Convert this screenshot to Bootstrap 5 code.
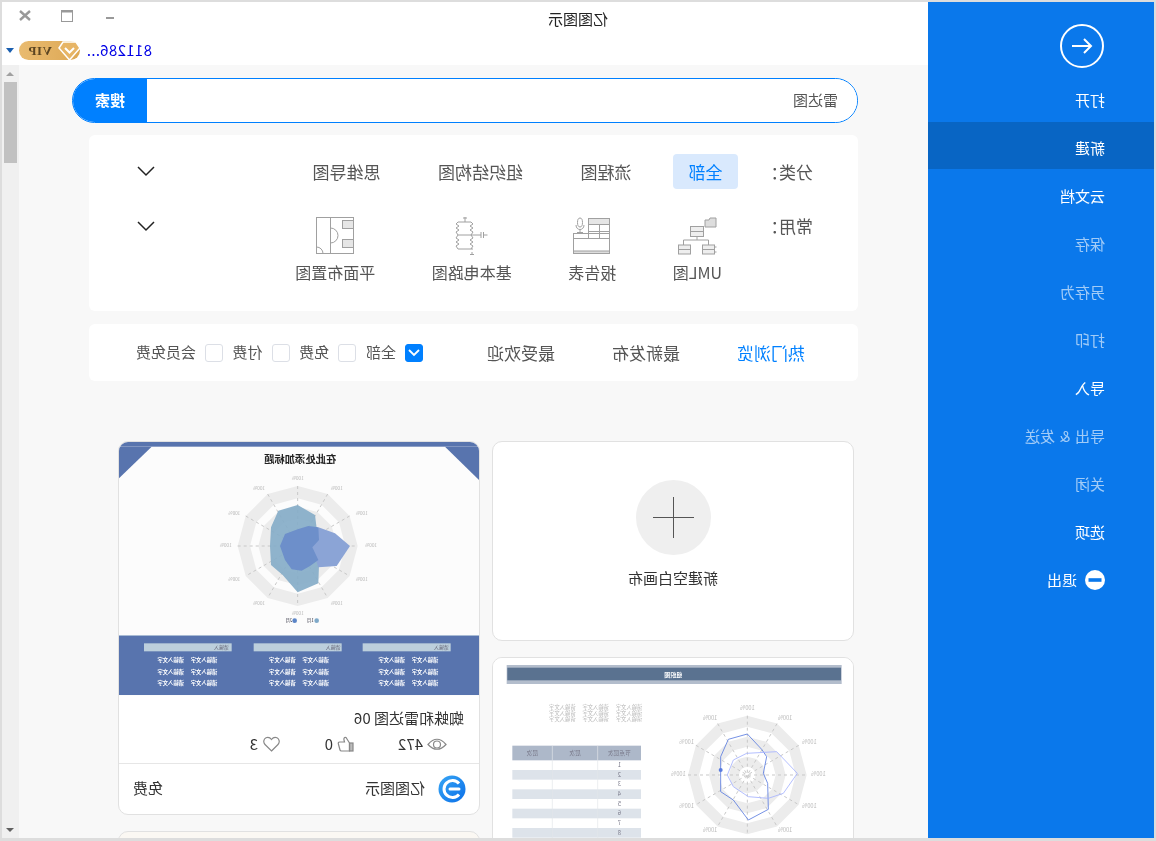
<!DOCTYPE html>
<html lang="zh-CN">
<head>
<meta charset="utf-8">
<title>亿图图示</title>
<link href="https://cdn.jsdelivr.net/npm/bootstrap@5.3.0/dist/css/bootstrap.min.css" rel="stylesheet">
<style>
html,body{margin:0;height:100%;overflow:hidden;background:#ddd;}
body{font-family:"Noto Sans CJK SC","Liberation Sans",sans-serif;font-size:15px;color:#333;}
.app-frame{width:1156px;height:841px;padding:2px 2px 3px;background:#ddd;transform:scaleX(-1);overflow:hidden;}
.side-pane{width:226px;background:#0a78eb;flex:none;padding-top:22px;}
.side-arrow{margin-left:50px;display:block;}
.side-list{margin-top:6px;}
.side-item{height:47px;margin-bottom:1px;padding:4px 0 0 49px;display:flex;align-items:center;gap:8px;color:#fff;font-size:15px;text-decoration:none;line-height:1;word-spacing:1.500px;}
.side-item.muted-item{color:rgba(255,255,255,.62);}
.side-item.current{background:#0865c4;}
.main-pane{width:926px;flex:none;}
.title-strip{height:63px;background:#fff;flex:none;}
.title-row{height:34px;}
.win-title{margin-left:320px;font-size:15px;color:#222;width:60px;white-space:nowrap;}
.win-ctrls{margin-left:auto;width:126px;flex:none;}
.user-row{height:28px;padding-left:776px;}
.user-name{color:#0000e6;font-size:15px;width:66px;white-space:nowrap;letter-spacing:.35px;}
.vip-wrap{width:61px;height:19px;margin-left:6px;margin-right:5px;position:relative;background:linear-gradient(90deg,#dda855,#e9bb70);border-radius:10px;padding-left:28px;font-family:"Liberation Serif",serif;font-weight:700;font-size:13px;line-height:19px;color:#5b4522;letter-spacing:.5px;}
.vip-gem{position:absolute;left:-1px;top:0;}
.drop-caret{width:0;height:0;border-left:4px solid transparent;border-right:4px solid transparent;border-top:5px solid #1a5fb0;}
.body-zone{min-height:0;background:#f8f8f8;}
.scroll-area{width:909px;flex:none;overflow:hidden;padding:13px 0 0 70px;}
.fake-scroll{width:17px;flex:none;background:#f0f0f0;align-items:center;}
.sc-btn{height:17px;display:flex;align-items:center;justify-content:center;}
.sc-up{width:0;height:0;border-left:4px solid transparent;border-right:4px solid transparent;border-bottom:4px solid #a0a0a0;}
.sc-down{width:0;height:0;border-left:4px solid transparent;border-right:4px solid transparent;border-top:4px solid #606060;}
.sc-thumb{width:13px;height:81px;background:#c1c1c1;}
.search-box{width:786px;height:45px;border:1px solid #0080ff;border-radius:23px;overflow:hidden;background:#fff;flex-wrap:nowrap;}
.search-box .form-control{border:0;background:#fff;font-size:15px;color:#555;padding:0 0 0 19px;display:flex;align-items:center;border-radius:0;}
.search-btn{width:74px;border:0;border-radius:0;background:#0080ff;color:#fff;font-size:15px;font-weight:700;padding:0;}
.filter-panel{width:769px;height:176px;margin-top:12px;background:#fff;border-radius:6px;padding:19px 48px 0 45px;}
.lbl-col{font-size:17px;color:#555;line-height:24px;white-space:nowrap;}
.cat-row{height:35px;font-size:17px;color:#555;}
.cat-line{gap:25.500px;}
.cat-item{padding:0 16px;line-height:35px;white-space:nowrap;}
.cat-item.on{background:#d9e9fd;color:#0080ff;border-radius:4px;width:65px;text-align:center;padding:0;}
.cat-first{width:75px;flex:none;}
.tool-row{margin-top:28px;}
.tool-first{width:91px;flex:none;margin-top:-3px;}
.tool-list{gap:56.500px;}
.tool-item{display:flex;flex-direction:column;align-items:center;font-size:16px;color:#555;white-space:nowrap;line-height:24px;}
.tool-item svg{display:block;height:38px;margin-bottom:5px;}
.chev{flex:none;display:block;}
.chev-low{margin-top:4px;}
.sort-bar{width:769px;height:57px;margin-top:13px;background:#fff;border-radius:6px;padding-left:53px;font-size:17px;color:#555;}
.sort-item{white-space:nowrap;}
.sort-item.on{color:#0080ff;}
.sort-tabs{gap:57px;margin-right:64px;}
.chk-group{font-size:15px;color:#555;gap:9.700px;}
.chk-one{display:flex;align-items:center;gap:9px;white-space:nowrap;}
.chk-box{width:18px;height:18px;border:1px solid #dcdfe6;border-radius:3px;background:#fff;display:flex;align-items:center;justify-content:center;}
.chk-box.on{background:#0080ff;border-color:#0080ff;}
.cards-wrap{margin:60px 0 0 4px;gap:12px;}
.cards-col{width:362px;flex:none;gap:16px;}
.tpl-card{background:#fff;border:1px solid #e1e1e1;border-radius:10px;overflow:hidden;flex:none;}
.new-card{height:200px;padding-top:38px;align-items:center;}
.plus-disc{width:75px;height:75px;border-radius:50%;background:#efefef;display:flex;align-items:center;justify-content:center;margin-left:-2px;}
.new-label{margin-top:12px;font-size:15px;line-height:22px;color:#333;}
.thumb-img{display:block;width:360px;filter:blur(.5px);}
.card-name{padding:11px 0 0 15px;line-height:22px;font-size:15px;color:#333;}
.card-meta{height:20px;margin:5px 0 9px;padding-left:32px;font-size:15px;color:#333;line-height:20px;}
.meta-a{width:93px;gap:4px;}
.meta-b{width:74px;gap:4px;}
.meta-c{gap:5px;}
.card-foot{height:51px;border-top:1px solid #e6e6e6;padding:0 14px 1px 13px;font-size:15px;color:#333;}
.foot-brand{gap:13px;}
.peek-card{height:80px;background:#fbf8f3;}
.thumb-txt{font-family:"Noto Sans CJK SC",sans-serif;}
</style>
</head>
<body>
<div class="app-frame d-flex">
  <aside class="side-pane">
    <svg class="side-arrow" width="44" height="44" viewBox="0 0 44 44" fill="none" stroke="#fff"><circle cx="22" cy="22" r="21" stroke-width="2"/><path d="M32 22H13M20 15l-7 7 7 7" stroke-width="2"/></svg>
    <nav class="side-list nav flex-column">
      <a class="side-item" href="#">打开</a>
      <a class="side-item current" href="#">新建</a>
      <a class="side-item" href="#">云文档</a>
      <a class="side-item muted-item" href="#">保存</a>
      <a class="side-item muted-item" href="#">另存为</a>
      <a class="side-item muted-item" href="#">打印</a>
      <a class="side-item" href="#">导入</a>
      <a class="side-item muted-item" href="#">导出 &amp; 发送</a>
      <a class="side-item muted-item" href="#">关闭</a>
      <a class="side-item" href="#">选项</a>
      <a class="side-item" href="#"><svg width="20" height="20" viewBox="0 0 20 20"><circle cx="10" cy="10" r="10" fill="#fff"/><rect x="3.500" y="8.200" width="13" height="3.600" fill="#0a78eb"/></svg>退出</a>
    </nav>
  </aside>
  <main class="main-pane d-flex flex-column">
    <header class="title-strip">
      <div class="title-row d-flex align-items-center">
        <div class="win-title">亿图图示</div>
        <svg class="win-ctrls" height="34" viewBox="0 0 126 34" fill="none" stroke="#999"><path d="M14 16h8" stroke-width="2"/><rect x="55.500" y="8.500" width="11" height="11"/><path d="M55 9.500h12" stroke-width="2"/><path d="M98 9l10 9M108 9l-10 9" stroke-width="2.400"/></svg>
      </div>
      <div class="user-row d-flex align-items-center">
        <div class="user-name">811286...</div>
        <div class="vip-wrap">VIP
          <svg class="vip-gem" width="23" height="20" viewBox="0 0 23 20"><polygon points="5,1 18,1 22,7 11.500,19 1,7" fill="#e7b566" stroke="#fff" stroke-width="1.500"/><path d="M7 7l4.500 4.500L16 7" fill="none" stroke="#fff" stroke-width="2"/></svg>
        </div>
        <div class="drop-caret"></div>
      </div>
    </header>
    <div class="body-zone d-flex flex-grow-1">
      <div class="scroll-area">
        <div class="input-group search-box">
          <span class="form-control">雷达图</span>
          <button class="btn search-btn" type="button">搜索</button>
        </div>
        <section class="filter-panel">
          <div class="cat-row d-flex align-items-center">
            <div class="lbl-col cat-first">分类：</div>
            <div class="d-flex cat-row cat-line flex-grow-1 align-items-center">
              <div class="cat-item on">全部</div>
              <div class="cat-item">流程图</div>
              <div class="cat-item">组织结构图</div>
              <div class="cat-item">思维导图</div>
              <svg class="chev ms-auto" width="18" height="11" viewBox="0 0 18 11" fill="none" stroke="#222" stroke-width="1.500"><path d="M1 1l8 8 8-8"/></svg>
            </div>
          </div>
          <div class="tool-row d-flex align-items-start">
            <div class="lbl-col tool-first">常用：</div>
            <div class="tool-list d-flex flex-grow-1">
              <div class="tool-item">
                <svg width="40" height="38" viewBox="0 0 40 38" fill="none" stroke="#a0a0a0"><g transform="translate(40,0) scale(-1,1)"><path d="M28 10V3h4l1-2h6v9z" fill="#ddd"/><rect x="13.500" y="9.500" width="13" height="10" fill="#eee"/><path d="M13.500 14.500h13M20 20v3M6.500 28v-5h25v5"/><rect x="1.500" y="28" width="12" height="9" fill="#eee"/><path d="M1.500 32.500h12"/><rect x="25.500" y="28" width="12" height="9" fill="#eee"/><path d="M25.500 32.500h12M37.500 30h2M37.500 35h2"/></g></svg>
                <span>UML图</span>
              </div>
              <div class="tool-item">
                <svg width="38" height="38" viewBox="0 0 38 38" fill="none" stroke="#a0a0a0"><g transform="translate(38,0) scale(-1,1)"><rect x="15.500" y="1.500" width="21" height="20"/><rect x="15.500" y="1.500" width="21" height="6" fill="#e6e6e6"/><path d="M15.500 14.500h21M26.500 7.500v14"/><rect x="0.500" y="16.500" width="36" height="20"/><path d="M0.500 21.500h36" /><rect x="0.500" y="34" width="36" height="2.500" fill="#ddd"/><ellipse cx="7" cy="5.500" rx="2.500" ry="4.500"/><path d="M3 8c0 3 2 4.500 4 4.500s4-1.500 4-4.500M7 12.500v3M4 15.500h6"/></g></svg>
                <span>报告表</span>
              </div>
              <div class="tool-item">
                <svg width="33" height="38" viewBox="0 0 33 38" fill="none" stroke="#a0a0a0"><g transform="translate(33,0) scale(-1,1)"><path d="M10 0v5M8 1h4M3 18h21M24 18h2M26 15v6M28.500 15v6M28.500 18h4M17 35v3M15 37.500h4"/><path d="M10 5H3l-2 2 3 2-3 2 3 2-3 2 2 3-2 3 3 2-3 2 3 2-3 2 2 3h15"/><path d="M10 5h6l2 2-3 2 3 2-3 2 3 2-2 3 2 3-3 2 3 2-3 2 3 2-2 3"/></g></svg>
                <span>基本电路图</span>
              </div>
              <div class="tool-item">
                <svg width="38" height="38" viewBox="0 0 38 38" fill="none" stroke="#a0a0a0"><g transform="translate(38,0) scale(-1,1)"><rect x="0.500" y="0.500" width="37" height="36"/><path d="M14.500 0.500v36M14.500 11a7.500 7.500 0 0 1 0 15M0.500 30a6.500 6.500 0 0 1 6.500 6.500"/><rect x="26.500" y="3.500" width="11" height="8" fill="#e6e6e6"/><rect x="26.500" y="22.500" width="11" height="8" fill="#e6e6e6"/></g></svg>
                <span>平面布置图</span>
              </div>
              <svg class="chev chev-low ms-auto" width="18" height="11" viewBox="0 0 18 11" fill="none" stroke="#222" stroke-width="1.500"><path d="M1 1l8 8 8-8"/></svg>
            </div>
          </div>
        </section>
        <section class="sort-bar d-flex align-items-center">
          <div class="sort-tabs d-flex">
            <div class="sort-item on">热门浏览</div>
            <div class="sort-item">最新发布</div>
            <div class="sort-item">最受欢迎</div>
          </div>
          <div class="chk-group d-flex">
            <label class="chk-one"><span class="chk-box on"><svg width="12" height="8" viewBox="0 0 12 8" fill="none" stroke="#fff" stroke-width="1.800"><path d="M1 1l5 5 5-5"/></svg></span>全部</label>
            <label class="chk-one"><span class="chk-box"></span>免费</label>
            <label class="chk-one"><span class="chk-box"></span>付费</label>
            <label class="chk-one"><span class="chk-box"></span>会员免费</label>
          </div>
        </section>
        <div class="cards-wrap d-flex">
          <div class="cards-col d-flex flex-column">
            <article class="tpl-card new-card d-flex flex-column">
              <div class="plus-disc"><svg width="41" height="41" viewBox="0 0 41 41" stroke="#555"><path d="M20.500 0v41M0 20.500h41"/></svg></div>
              <div class="new-label">新建空白画布</div>
            </article>
            <article class="tpl-card">
              <svg class="thumb-img" height="270" viewBox="0 0 1080 810">
                <rect width="1080" height="810" fill="#fff"/>
                <g transform="translate(1089,-24) scale(-1,1)">
                  <rect x="50" y="45" width="1005" height="57" fill="#b3bdcc"/>
                  <rect x="52" y="53" width="1001" height="38" fill="#5a7290"/>
                  <rect x="67" y="287" width="386" height="44" fill="#adb8c9"/>
                  <rect x="67" y="360" width="386" height="29" fill="#dde3ea"/>
                  <rect x="67" y="418" width="386" height="29" fill="#dde3ea"/>
                  <rect x="67" y="476" width="386" height="29" fill="#dde3ea"/>
                  <rect x="67" y="534" width="386" height="29" fill="#dde3ea"/>
                  <rect x="67" y="592" width="386" height="29" fill="#dde3ea"/>
                  <path d="M187 287V640M323 287V640" stroke="#e2e5ea" stroke-width="2"/>
                  <g transform="translate(772,375)">
                    <use href="#ring12" transform="scale(178)" fill="#ececec"/>
                    <use href="#ring12" transform="scale(145)" fill="#fff"/>
                    <use href="#ring12" transform="scale(115)" fill="#ececec"/>
                    <use href="#ring12" transform="scale(85)" fill="#fff"/>
                    <use href="#ring12" transform="scale(55)" fill="#ececec"/>
                    <use href="#ring12" transform="scale(25)" fill="#fff"/>
                    <use href="#spokes" transform="scale(178)"/>
                  </g>
                  <polygon points="772,252 715,268 692,320 692,360 692,425 730,450 775,510 835,478 833,400 820,370 830,320 815,298" fill="none" stroke="#5a7ce0" stroke-width="2.500"/>
                  <polygon points="730,330 770,310 860,305 922,370 880,430 835,445 775,440 730,410 712,375" fill="none" stroke="#a5b2ff" stroke-width="2.500"/>
                  <circle cx="692" cy="360" r="6" fill="#5a7ce0"/>
                </g>
                <g class="thumb-txt" font-size="17" fill="#bbb" text-anchor="middle">
                  <text x="429" y="185">100%</text><text x="204" y="185">100%</text><text x="131" y="257">100%</text><text x="499" y="257">100%</text><text x="104" y="355">100%</text><text x="524" y="355">100%</text><text x="131" y="451">100%</text><text x="499" y="451">100%</text><text x="429" y="521">100%</text><text x="204" y="521">100%</text><text x="317" y="155">100%</text>
                </g>
                <text class="thumb-txt" x="539" y="57" font-size="18" fill="#fff" text-anchor="middle" font-weight="700">组织图</text>
                <g class="thumb-txt" font-size="16" fill="#b8b8b8">
                  <text x="632" y="154">请输入文字</text><text x="732" y="154">请输入文字</text><text x="832" y="154">请输入文字</text>
                  <text x="632" y="172">请输入文字</text><text x="732" y="172">请输入文字</text><text x="832" y="172">请输入文字</text>
                  <text x="632" y="190">请输入文字</text><text x="732" y="190">请输入文字</text><text x="832" y="190">请输入文字</text>
                </g>
                <g class="thumb-txt" font-size="17" fill="#778" text-anchor="middle">
                  <text x="701" y="292">节点层次</text><text x="834" y="292">层次</text><text x="962" y="292">层次</text>
                  <text x="701" y="327">1</text><text x="701" y="356">2</text><text x="701" y="385">3</text><text x="701" y="414">4</text><text x="701" y="443">5</text><text x="701" y="472">6</text><text x="701" y="501">7</text><text x="701" y="530">8</text>
                </g>
              </svg>
            </article>
          </div>
          <div class="cards-col d-flex flex-column">
            <article class="tpl-card">
              <svg class="thumb-img" height="254" viewBox="0 0 1080 762">
                <defs>
                  <polygon id="ring12" points="0,-1 .5,-.866 .866,-.5 1,0 .866,.5 .5,.866 0,1 -.5,.866 -.866,.5 -1,0 -.866,-.5 -.5,-.866"/>
                  <path id="spokes" d="M-.866 -.5L.866 .5M-.5 -.866L.5 .866M0 -1V1M.5 -.866L-.5 .866M.866 -.5L-.866 .5M-1 0H1" stroke="#c8c8c8" stroke-width="1" stroke-dasharray="3 3" vector-effect="non-scaling-stroke" fill="none"/>
                </defs>
                <rect width="1080" height="762" fill="#fcfcfc"/>
                <g transform="translate(1092,-6) scale(-1,1)">
                  <rect x="12" y="6" width="1080" height="14" fill="#5874ae"/>
                  <polygon points="12,115 110,20 12,20" fill="#5874ae"/>
                  <polygon points="990,20 1092,120 1092,20" fill="#5874ae"/>
                  <g transform="translate(548,318)">
                    <use href="#ring12" transform="scale(180)" fill="#ececec"/>
                    <use href="#ring12" transform="scale(143)" fill="#fcfcfc"/>
                    <use href="#ring12" transform="scale(118)" fill="#ececec"/>
                    <use href="#ring12" transform="scale(82)" fill="#fcfcfc"/>
                    <use href="#spokes" transform="scale(180)"/>
                  </g>
                  <polygon points="548,195 490,212 468,262 465,318 468,375 503,405 548,457 610,430 612,375 590,320 605,265 600,225" fill="#86adc8" fill-opacity=".92"/>
                  <polygon points="610,262 660,280 705,318 665,378 610,382 590,320" fill="#8ba4d6"/>
                  <polygon points="548,268 580,258 610,262 612,300 592,322 610,360 585,378 560,392 530,388 510,360 495,318 510,282" fill="#6d8fca"/>
                  <rect x="12" y="585" width="1080" height="180" fill="#5874ae"/>
                  <rect x="12" y="585" width="1080" height="3" fill="#a8bbd4"/>
                  <rect x="87" y="610" width="263" height="24" fill="#bccfdc"/>
                  <rect x="416" y="610" width="264" height="24" fill="#bccfdc"/>
                  <rect x="743" y="610" width="264" height="24" fill="#bccfdc"/>
                  <circle cx="539" cy="542" r="7" fill="#5b85c7"/>
                  <circle cx="605" cy="542" r="7" fill="#7fa9c9"/>
                </g>
                <text class="thumb-txt" x="428" y="63" font-size="31" font-weight="700" fill="#222">在此处添加标题</text>
                <g class="thumb-txt" font-size="14" fill="#b8b8b8" text-anchor="middle">
                  <text x="544" y="113">100%</text><text x="660" y="145">100%</text><text x="427" y="145">100%</text><text x="352" y="220">100%</text><text x="734" y="220">100%</text><text x="324" y="316">100%</text><text x="760" y="316">100%</text><text x="352" y="416">100%</text><text x="734" y="416">100%</text><text x="427" y="488">100%</text><text x="660" y="488">100%</text><text x="544" y="520">100%</text>
                </g>
                <g class="thumb-txt" font-size="13" fill="#223"><text x="496" y="540">1月</text><text x="560" y="540">2月</text></g>
                <g class="thumb-txt" font-size="16" fill="#fff" font-weight="700">
                  <text x="785" y="660">请输入文字</text><text x="885" y="660">请输入文字</text><text x="450" y="660">请输入文字</text><text x="550" y="660">请输入文字</text><text x="122" y="660">请输入文字</text><text x="222" y="660">请输入文字</text>
                  <text x="785" y="695">请输入文字</text><text x="885" y="695">请输入文字</text><text x="450" y="695">请输入文字</text><text x="550" y="695">请输入文字</text><text x="122" y="695">请输入文字</text><text x="222" y="695">请输入文字</text>
                  <text x="785" y="730">请输入文字</text><text x="885" y="730">请输入文字</text><text x="450" y="730">请输入文字</text><text x="550" y="730">请输入文字</text><text x="122" y="730">请输入文字</text><text x="222" y="730">请输入文字</text>
                </g>
                <g class="thumb-txt" font-size="15" fill="#667"><text x="750" y="621">请输入</text><text x="415" y="621">请输入</text><text x="90" y="621">请输入</text></g>
              </svg>
              <div class="card-name">蜘蛛和雷达图 06</div>
              <div class="card-meta d-flex align-items-center">
                <div class="meta-a d-flex align-items-center">
                  <svg width="20" height="15" viewBox="0 0 20 15" fill="none" stroke="#888" stroke-width="1.200"><path d="M1 7.500Q10-3 19 7.500Q10 17 1 7.500z"/><circle cx="10" cy="7.500" r="3.500"/></svg><span>472</span>
                </div>
                <div class="meta-b d-flex align-items-center">
                  <svg width="17" height="16" viewBox="0 0 17 16" fill="none" stroke="#888" stroke-width="1.200"><rect x="1" y="7" width="3.500" height="8" fill="#bbb"/><path d="M4.500 7L8 1.500C9.500 1 10.500 2 10 4L9.500 6H14.500C15.500 6 16 7 15.600 8L14 14C13.800 14.700 13.200 15 12.500 15H4.500z"/></svg><span>0</span>
                </div>
                <div class="meta-c d-flex align-items-center">
                  <svg width="17" height="16" viewBox="0 0 17 16" fill="none" stroke="#888" stroke-width="1.200"><path d="M8.500 15L2 8.500C0 6.500 0.500 3 3 1.800C5 1 7 1.500 8.500 3.500C10 1.500 12 1 14 1.800C16.500 3 17 6.500 15 8.500z"/></svg><span>3</span>
                </div>
              </div>
              <div class="card-foot d-flex align-items-center justify-content-between">
                <div class="foot-brand d-flex align-items-center">
                  <svg width="28" height="28" viewBox="0 0 28 28"><defs><linearGradient id="logoBlue" x1="1" y1="0" x2="0" y2="1"><stop offset="0" stop-color="#38a6f5"/><stop offset="1" stop-color="#0a6fe8"/></linearGradient></defs><circle cx="14" cy="14" r="13.500" fill="url(#logoBlue)"/><g transform="translate(28,0) scale(-1,1)" fill="none" stroke="#fff" stroke-width="3"><path d="M21 8.500A8.500 8.500 0 1 0 21 19.500"/><path d="M12 14H21" stroke-linecap="round"/></g></svg>
                  <span>亿图图示</span>
                </div>
                <span>免费</span>
              </div>
            </article>
            <article class="tpl-card peek-card"></article>
          </div>
        </div>
      </div>
      <div class="fake-scroll d-flex flex-column">
        <div class="sc-btn"><span class="sc-up"></span></div>
        <div class="sc-thumb"></div>
        <div class="sc-btn mt-auto"><span class="sc-down"></span></div>
      </div>
    </div>
  </main>
</div>
<script src="https://cdn.jsdelivr.net/npm/bootstrap@5.3.0/dist/js/bootstrap.bundle.min.js"></script>
</body>
</html>
